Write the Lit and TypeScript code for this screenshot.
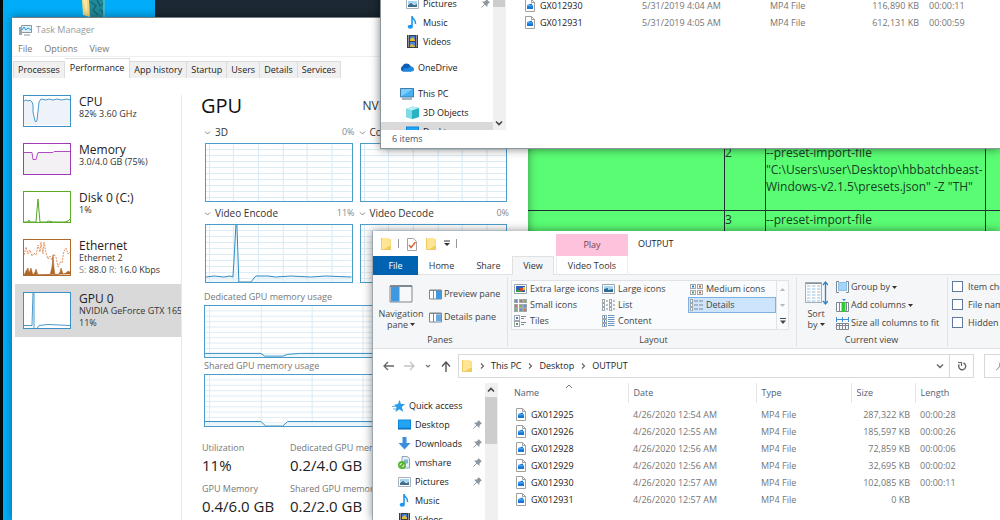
import { LitElement, html, svg, css } from "lit";
import { customElement, property } from "lit/decorators.js";
import { classMap } from "lit/directives/class-map.js";

const base = css`
  * { box-sizing: border-box; }
  button, input, a { font: inherit; color: inherit; margin: 0; }
  button { background: none; border: 0; padding: 0; white-space: nowrap; }
  a { text-decoration: none; }
  svg { display: block; flex: none; }
`;

/* ---------- icons ---------- */

const icon = (w: number, h: number, body: unknown) =>
  html`<svg width=${w} height=${h} viewBox="0 0 ${w} ${h}" fill="none" aria-hidden="true">${body}</svg>`;

const folder = () => icon(12, 14, svg`
  <path d="M1 1h8v1h2v11H1z" fill="#fbe08a"/><path d="M1 1h8v12H1z" fill="#ffe594"/>
  <path d="M9 9h2v4H3z" fill="#f2cc5d"/><path d="M1.500 1v11.500h9.500" stroke="#efcb68"/>`);

const fileIcon = () => icon(10, 13, svg`
  <path d="M.5.5h6l3 3v9h-9z" fill="#fff" stroke="#a0a0a0"/><path d="M6.500.5v3h3" stroke="#a0a0a0"/>
  <path d="M2 6l5-1.500V6h1v4H2z" fill="#1279d8"/><path d="M2 6.800h6" stroke="#8ecbf7" stroke-width=".7"/>`);

const pin = () => icon(9, 9, svg`
  <path d="M5.500 0L9 3.500l-1 .3L6.500 5.500 6.300 8 1 2.700l2.500-.2L5.200 1z" fill="#8d979f"/>
  <path d="M4 5L.5 8.500" stroke="#8d979f"/>`);

const chev = (d: string, w = 8, color = "#555", sw = 1.3) =>
  icon(w, w, svg`<path d=${d} stroke=${color} stroke-width=${sw}/>`);

const caret = () => icon(5, 3, svg`<path d="M0 0h5L2.500 3z" fill="#333"/>`);

const places: Record<string, unknown> = {
  star: icon(13, 12, svg`<path d="M7.500 0L9 4h4L9.800 7l1.500 5-4-2.800L3.500 12l1-5L2 4.800l4-.8z" fill="#2b9be8"/><path d="M0 6.500h4M1 9h3" stroke="#5fb5f1"/>`),
  desktop: icon(13, 11, svg`<path d="M0 .5h13v9.500H0z" fill="#0f87dd"/><path d="M1 1.500h11V8.500H1z" fill="#22a4f5"/><path d="M0 10h13" stroke="#0b62a8"/>`),
  down: icon(13, 13, svg`<path d="M4.500 0h4v6H12.500L6.500 12.500.500 6H4.500z" fill="#3a8fdc"/>`),
  share: icon(13, 13, svg`<path d="M4 .5h5l2.500 2v9.500H4z" fill="#e8f1f8" stroke="#8fa2b0"/><path d="M6 3.500h4v4H6z" fill="#7db7e0"/><circle cx="4" cy="9" r="4" fill="#5ab534"/><path d="M2 9.500a2 2 0 012-2M6 8.500a2 2 0 01-2 2.200" stroke="#e9f8df"/>`),
  pictures: icon(13, 10, svg`<path d="M.5.5h12v9H.5z" fill="#fff" stroke="#a6b3bd"/><path d="M2 2h9v3H2z" fill="#a8d4f3"/><path d="M2 6l3-2 3 2 3-1v3H2z" fill="#3f6d8a"/>`),
  music: icon(13, 13, svg`<path d="M6 10.500V0c0 3.500 4.500 3.500 3.500 8" stroke="#1d97ee" stroke-width="1.600"/><ellipse cx="4.300" cy="10.700" rx="2.600" ry="2" fill="#1d97ee"/>`),
  videos: icon(13, 13, svg`<path d="M1 0h11v13H1z" fill="#3c4046"/><path d="M4 1h5v5H4z" fill="#3877d6"/><path d="M4 7h5v5H4z" fill="#4a85d8"/><path d="M4 4l3-2 2 3v1H4z" fill="#e8b93a"/><path d="M4 10l2-1 3 2v1H4z" fill="#d8b046"/><path d="M2.500.5v12M10.500.5v12" stroke="#e8e8e8" stroke-dasharray="1 1"/>`),
  onedrive: icon(14, 9, svg`<path d="M3 8.500a3 3 0 01-.5-5.500A4.500 4.500 0 0110.500 3 3 3 0 0111 8.500z" fill="#0f5fb5"/><path d="M3 8.500c-1-2 2-4 4-3l4-2c2 .3 3 1.500 3 2.800 0 1.500-1 2.200-2.500 2.200z" fill="#1c8ae0"/>`),
  pc: icon(14, 12, svg`<path d="M.5.5h13v8.500H.5z" fill="#45b0f2" stroke="#3a7dab"/><path d="M1 1h12L1 8.500z" fill="#7ccbf8"/><path d="M2 11h10" stroke="#8c9aa5" stroke-width="1.500"/>`),
  cube: icon(13, 13, svg`<path d="M0 3l7-2.500L13 2v9l-6 2-7-2z" fill="#27b3c4"/><path d="M0 3l6 1.500V13L0 11z" fill="#7fdbe6"/><path d="M0 3l7-2.500L13 2 6 4.500z" fill="#bdf0f4"/>`),
};

const frame = "#7f8890";
const layouts: Record<string, unknown> = {
  xl: icon(13, 10, svg`<path d="M.5.5h12v9H.5z" fill="#fff" stroke="#9aa3ab"/><path d="M2 2h9v6H2z" fill="#2f5fb8"/><path d="M2 6h5v2H2z" fill="#3c9a48"/><path d="M6 4h3v3H6z" fill="#d24a2a"/><path d="M9 3h2v3H9z" fill="#e8c63a"/>`),
  large: icon(13, 10, svg`<path d="M.5.5h12v9H.5z" fill="#fff" stroke="#9aa3ab"/><path d="M2 2h9v6H2z" fill="#a9d5f2"/><path d="M2 5l4-1v2l5-1v3H2z" fill="#2d6a92"/>`),
  medium: icon(13, 11, svg`${[0, 7].map(x => [0, 6].map(y => svg`<rect x=${x + .5} y=${y + .5} width="5" height="4" fill="#fff" stroke="#a0a7ad"/><rect x=${x + 2} y=${y + 1.5} width="2" height="2" fill=${x === y ? "#3a78b8" : x ? "#c9622f" : "#4f9a48"} />`))}`),
  small: icon(13, 13, svg`${[0, 5, 9].map((x, i) => [0, 5, 9].map((y, j) => svg`<rect x=${x + .5} y=${y + .5} width="3" height="3" fill="#fff" stroke="#a0a7ad"/><rect x=${x + 1} y=${y + 1} width="2" height="2" fill=${["#5a94c9", "#c9744f", "#8bab6e"][(i + j) % 3]} />`))}`),
  list: icon(13, 12, svg`${[0, 7].map(x => [0, 4, 8].map(y => svg`<rect x=${x + .5} y=${y + .5} width="2" height="3" fill="#fff" stroke="#a0a7ad"/><path d="M${x + 4} ${y + 2}h2" stroke=${frame} />`))}`),
  details: icon(13, 12, svg`${[0, 4, 8].map(y => svg`<rect x=".5" y=${y + .5} width="2" height="3" fill="#fff" stroke="#a0a7ad"/><path d="M4 ${y + 2}h4M9 ${y + 2}h4" stroke=${frame} />`)}`),
  tiles: icon(13, 12, svg`${[0, 6].map(y => svg`<rect x=".5" y=${y + .5} width="5" height="5" fill="#fff" stroke="#a0a7ad"/><rect x="2" y=${y + 2} width="2" height="2" fill=${y ? "#4f9a48" : "#3a78c8"} /><path d="M7 ${y + 1.5}h5M7 ${y + 3.5}h3" stroke=${frame} />`)}`),
  content: icon(13, 12, svg`${[0, 4, 8].map(y => svg`<rect x=".5" y=${y + .5} width="4" height="3" fill="#fff" stroke="#a0a7ad"/><rect x="2" y=${y + 1} width="1" height="2" fill="#3a78c8"/><path d="M6 ${y + .5}h6.500M6 ${y + 2.5}h6.500" stroke="#6f95bd"/>`)}`),
};

const paneIcon = (details: boolean) => icon(13, 11, svg`
  <path d="M.5 1h12v9H.5z" fill="#fff" stroke=${frame} /><path d="M0 1.500h13M4.500 1v9" stroke=${frame} />
  <path d="M7 2h5v8H7z" fill=${details ? "#9cc8ee" : "#3f98e0"} />
  ${details ? svg`<path d="M7 4h5M7 6h5M7 8h5" stroke="#3f86c8"/>` : ""}`);

const navPaneIcon = () => icon(24, 18, svg`
  <path d="M1 1h22v16H1z" fill="#f7f8f9" stroke=${frame} /><path d="M1 1h22" stroke=${frame} stroke-width="2"/>
  <path d="M2 2h8.500v14.500H2z" fill="#3f98e0"/>`);

const sortIcon = () => icon(24, 24, svg`
  <path d="M1.500 1.500h16v20h-16z" fill="#fff" stroke="#a5acb2"/><path d="M1.500 2.500h16" stroke="#888f96"/>
  ${[5, 8, 11, 14, 17, 20].map(y => svg`<path d="M3 ${y}h3.500M8 ${y}h3.500M13 ${y}h3.500" stroke=${y % 2 ? "#a9bccb" : "#8fc3e8"} />`)}
  <path d="M21.500 2v20M19 4l2.500-3L24 4M19 20l2.500 3 2.500-3" stroke="#2f83c8" stroke-width="1.300"/>`);

const groupIcon = () => icon(13, 12, svg`<path d="M3 .5H.5v11H3M10 .5h2.500v11H10" stroke=${frame} /><path d="M2.500 1.500h8v8h-8z" fill="#a6d4f7" stroke="#8bc0e8"/>`);
const addIcon = () => icon(13, 13, svg`<path d="M.5 3.500h12v9H.5z" fill="#fff" stroke=${frame} /><path d="M3.500 3v9M10.500 3v9" stroke=${frame} /><path d="M5.500 3h4v10h-4z" fill="#2fc93a"/><path d="M6 0h4L8 2z" fill="#2f83c8"/>`);
const fitIcon = () => icon(13, 13, svg`<path d="M.5 0v5M6.500 0v5M12.500 0v5M1 2.500h11" stroke="#3f8fd0"/><path d="M.5 6.500h12v6H.5zM3.500 6v7M6.500 6v7M9.500 6v7M0 8.500h13" stroke=${frame} />`);

/* ---------- navigation tree ---------- */

interface Place { icon: string; label: string; pinned?: boolean; root?: boolean; gap?: boolean; selected?: boolean; }

@customElement("nav-tree")
class NavTree extends LitElement {
  @property({ attribute: false }) places: Place[] = [];
  @property({ type: Boolean, reflect: true }) end = false;
  static styles = [base, css`
    :host { display: flex; width: 125px; overflow: hidden; border-right: 1px solid #f0f0f0; }
    nav { flex: 1; min-width: 0; display: flex; flex-direction: column; padding-top: 13px; }
    :host([end]) nav { padding-top: 0; }
    a { display: flex; align-items: center; gap: 3px; height: 19px; flex: none; padding: 0 3px 0 25px; white-space: nowrap; }
    a.root { padding-left: 19px; }
    a.gap { margin-top: 7px; }
    a.sel { background: #d9d9d9; }
    a span { flex: 1; }
    a svg:first-child { margin-right: 1px; }
    .bar { width: 12px; background: #f0f0f0; display: flex; flex-direction: column; align-items: center; }
    .up, .down { height: 14px; display: grid; place-items: center; width: 12px; }
    .thumb { width: 12px; height: 47px; background: #cdcdcd; }
    :host([end]) .bar { justify-content: space-between; }
    :host([end]) .thumb { height: 13px; }
  `];
  render() {
    return html`
      <nav>${this.places.map(p => html`
        <a href="#" class=${classMap({ root: !!p.root, gap: !!p.gap, sel: !!p.selected })}>
          ${places[p.icon]}<span>${p.label}</span>${p.pinned ? pin() : ""}
        </a>`)}
      </nav>
      <div class="bar">
        ${this.end ? "" : html`<div class="up">${chev("M1 5.500L4 2.500 7 5.500", 8, "#444", 1.6)}</div>`}
        <div class="thumb"></div>
        ${this.end ? html`<div class="down">${chev("M1 2.500L4 5.500 7 2.500", 8, "#444", 1.6)}</div>` : ""}
      </div>`;
  }
}

/* ---------- file list ---------- */

@customElement("file-list")
class FileList extends LitElement {
  @property({ attribute: false }) rows: string[][] = [];
  @property({ type: Boolean }) headless = false;
  static styles = [base, css`
    :host { display: block; flex: 1; min-width: 0; overflow: hidden; padding-left: 2px; }
    table { width: 100%; min-width: 500px; table-layout: fixed; border-collapse: collapse; }
    th, td { padding: 0 0 0 5px; text-align: left; font-weight: 400; white-space: nowrap; }
    td { height: 17px; color: #757575; }
    th { height: 20px; color: #4f607a; border-right: 1px solid #e4e4e4; }
    th:last-child { border: 0; }
    th:first-child { padding-left: 14px; }
    td:first-child { padding-left: 16px; color: #222; }
    td.size { text-align: right; padding-right: 5px; }
    .name { display: flex; align-items: center; gap: 5px; }
    .head { display: flex; justify-content: space-between; padding-right: 55px; height: 18px; line-height: 18px; }
    .spacer td { height: 3px; }
    .c1, .c2 { width: 128px; } .c3 { width: 95px; } .c4 { width: 64px; }
  `];
  render() {
    return html`<table>
      <colgroup><col class="c1"><col class="c2"><col class="c3"><col class="c4"><col></colgroup>
      ${this.headless ? "" : html`<thead>
        <tr><th><div class="head">Name ${icon(8, 5, svg`<path d="M1 4L4 1 7 4" stroke="#777"/>`)}</div></th><th>Date</th><th>Type</th><th>Size</th><th>Length</th></tr>
        <tr class="spacer"><td colspan="5"></td></tr></thead>`}
      <tbody>${this.rows.map(r => html`<tr>
        <td><div class="name">${fileIcon()}${r[0]}</div></td><td>${r[1]}</td><td>MP4 File</td><td class="size">${r[2]}</td><td>${r[3]}</td>
      </tr>`)}</tbody>
    </table>`;
  }
}

/* ---------- usage graph ---------- */

@customElement("usage-graph")
class UsageGraph extends LitElement {
  @property() line = "";
  @property({ type: Boolean }) wide = false;
  static styles = [base, css`
    :host { display: block; border: 1px solid #4c9cc9; height: 59px; background: #fff; }
    :host([wide]) { height: 53px; }
    svg { width: 100%; height: 100%; }
  `];
  render() {
    const xs = this.wide ? [4, 56, 107, 158, 209, 260] : [3, 27, 52, 77, 101, 126];
    const w = this.wide ? 302 : 146;
    return html`<svg viewBox="0 0 ${w} 57" preserveAspectRatio="none" fill="none" aria-hidden="true">
      ${xs.map(x => svg`<path d="M${x + .5} 0v57" stroke="#d7eaf5"/>`)}
      ${[5, 11, 17, 23, 29, 35, 41, 47, 53].map(y => svg`<path d="M0 ${y + .5}h${w}" stroke="#dcecf6"/>`)}
      ${this.line ? svg`<path d="${this.line}V57H0z" fill="#e2f0f8" fill-opacity=".5"/><path d=${this.line} stroke="#2f8dc4"/>` : ""}
    </svg>`;
  }
}

/* ---------- task manager ---------- */

@customElement("task-manager")
class TaskManager extends LitElement {
  static styles = [base, css`
    :host { display: flex; flex-direction: column; background: #fff; border: 1px solid #777f86; border-width: 1px 0 0 0; }
    .title { display: flex; align-items: center; gap: 4px; height: 24px; padding-left: 7px; color: #999; }
    .menu { display: flex; gap: 12px; height: 15px; padding-left: 6px; color: #777; align-items: center; border-bottom: 1px solid #f0f0f0; }
    .tabs { display: flex; align-items: flex-end; height: 21px; padding-left: 1px; }
    .tabs button { height: 17px; background: #f0f0f0; border: 1px solid #dcdcdc; border-left-width: 0; border-bottom: 0; color: #222; padding: 0 4px; }
    .tabs button:first-child { border-left-width: 1px; }
    .tabs .on { background: #fff; height: 20px; padding: 0 5px 2px; }
    .body { display: flex; flex: 1; min-height: 0; padding: 9px 0 0 3px; }
    .list { width: 166px; flex: none; overflow: hidden; }
    .list button { display: flex; align-items: flex-start; gap: 8px; width: 100%; padding: 8px 0 8px 8px; text-align: left; overflow: hidden; color: #333; }
    .list .on { background: #d9d9d9; }
    .txt { display: flex; flex-direction: column; line-height: 12px; }
    .txt b { font-weight: 400; font-size: 12px; line-height: 13px; color: #222; }
    .txt i { font-style: normal; color: #888; }
    .pane { flex: 1; min-width: 0; margin-top: 8px; border-left: 1px solid #e8e8e8; padding: 0 21px 0 19px; }
    .top { display: flex; justify-content: space-between; align-items: center; height: 30px; margin-top: -4px; }
    h1 { margin: 0; font-size: 20px; font-weight: 400; line-height: 30px; color: #111; }
    .model { font-size: 12px; color: #333; }
    .grid { display: grid; grid-template-columns: 1fr 1fr; column-gap: 7px; padding-left: 4px; }
    .cap { display: flex; align-items: center; gap: 4px; height: 22px; color: #333; font-size: 10px; margin: 0 -2px 0 -1px; }
    .cap em { margin-left: auto; font-style: normal; color: #888; font-size: 9px; }
    .mem { height: 16px; line-height: 16px; padding-left: 3px; color: #777; }
    .mem-graph { margin-left: 3px; }
    .mem-first { margin-top: 6px; }
    .stats { display: grid; grid-template-columns: 88px 1fr; row-gap: 6px; padding: 13px 0 0 1px; }
    .stats dt { color: #777; line-height: 15px; }
    dl { margin: 0; } dd { margin: 0; font-size: 15px; line-height: 20px; color: #222; }
    .stats div { white-space: nowrap; }
  `];
  thumb(color: string, h: number, body: unknown) {
    return icon(48, h, svg`<rect x=".5" y=".5" width="47" height=${h - 1} fill="#fff"/>${body}<rect x=".5" y=".5" width="47" height=${h - 1} stroke=${color} />`);
  }
  render() {
    const cpu = "M1 6l2-1 2 1 2-1 2 2 1 3 0 7 2 9 1 1 1-2 1-9 1-9 2-3 5 1 3-1 4 1 4-1 5 1 5-1 3 1";
    const items = [
      { t: "CPU", s: "82%  3.60 GHz", g: this.thumb("#3c92c8", 32, svg`<path d="${cpu}v25H1z" fill="#eef3f9"/><path d=${cpu} stroke="#4a9acc"/>`) },
      { t: "Memory", s: "3.0/4.0 GB (75%)", g: this.thumb("#a33bb8", 32, svg`<path d="M1 9.500h8l1 7h3l2-7h15l1-1h17v23H1z" fill="#f3f1f4"/><path d="M1 9.500h8l1 7h3l2-7h15l1-1h17" stroke="#b14cc4"/>`) },
      { t: "Disk 0 (C:)", s: "1%", g: this.thumb("#5cab2a", 32, svg`<path d="M1 31h4l1-2 1 2h6l1-12 1-11 1 12 1 11h7l1-1 5 1 12 0 3-1 2-2" stroke="#57a629"/>`) },
      { t: "Ethernet", s: "Ethernet 2", g: this.thumb("#b0682a", 37, svg`<path d="M1 16l2-8 2 7 2-4 2 6 2-3 2 2 2-10 2 7 1-10 2 12 1-12 2 11 2 6 2-3 2 4 2-6 2 3 2 10 2-5 2 1 2-12 2-3 2 6 2-2 2 4" stroke="#e5935f" stroke-dasharray="2 1"/><path d="M1 36l2-4 2-3 1 5 2-5 2 7 2-3 1-3 2 6h12l2-8 1-12 1 13 1 7h3l2-3 1-4 2 6 3-1 2-2 2 1v2z" fill="#b0682a" stroke="#a85f20" stroke-width=".5"/>`) },
      { t: "GPU 0", s: "NVIDIA GeForce GTX 1650", g: this.thumb("#3c92c8", 37, svg`<path d="M1 33.500h8l1-33h1v36h3l2-3 9-1 22 1" stroke="#4a9acc"/>`) },
    ];
    return html`
      <div class="title">${icon(13, 12, svg`<path d="M2.500 1.500h10v7h-10z" fill="#dff0fa" stroke="#8b979f"/><path d="M3 6l2-3 2 3 2-2 3 2" stroke="#259bd8"/><path d="M0 3h3v8H0z" fill="#9ba5ac"/><path d="M5 11h6" stroke="#8b979f"/>`)}<span>Task Manager</span></div>
      <div class="menu"><button>File</button><button>Options</button><button>View</button></div>
      <div class="tabs" role="tablist">${["Processes", "Performance", "App history", "Startup", "Users", "Details", "Services"].map(t =>
        html`<button role="tab" class=${t === "Performance" ? "on" : ""}>${t}</button>`)}</div>
      <div class="body">
        <div class="list">${items.map((it, i) => html`<button class=${i === 4 ? "on" : ""}>${it.g}
          <span class="txt"><b>${it.t}</b><span>${it.s}</span>${i === 3 ? html`<span><i>S:</i> 88.0 <i>R:</i> 16.0 Kbps</span>` : i === 4 ? html`<span>11%</span>` : ""}</span></button>`)}</div>
        <div class="pane">
          <div class="top"><h1>GPU</h1><span class="model">NVIDIA GeForce GTX 1650</span></div>
          <div class="grid">${[
            ["3D", "0%", ""], ["Copy", "0%", ""],
            ["Video Encode", "11%", "M0 52l8-1 10 1 6-1 3 1 1-15 2-37 1 0 2 57 12 0 5-6 12 0 8 1 15-1 20 1 15-1 26 1"],
            ["Video Decode", "0%", ""],
          ].map(([n, v, l]) => html`<div><div class="cap">${chev("M1 2.500l2.500 2.500L6 2.500", 7, "#888", 1)}<span>${n}</span><em>${v}</em></div>
            <usage-graph .line=${l}></usage-graph></div>`)}</div>
          <div class="mem mem-first">Dedicated GPU memory usage</div>
          <usage-graph class="mem-graph" wide .line=${"M0 53h56l4 3h18l5-2 12-1h207"}></usage-graph>
          <div class="mem">Shared GPU memory usage</div>
          <usage-graph class="mem-graph" wide .line=${"M0 52h56l5 5h17l5-5h219"}></usage-graph>
          <dl class="stats">
            <div><dt>Utilization</dt><dd>11%</dd></div><div><dt>Dedicated GPU memory</dt><dd>0.2/4.0 GB</dd></div>
            <div><dt>GPU Memory</dt><dd>0.4/6.0 GB</dd></div><div><dt>Shared GPU memory</dt><dd>0.2/2.0 GB</dd></div>
          </dl>
        </div>
      </div>`;
  }
}

/* ---------- explorer with ribbon ---------- */

@customElement("explorer-window")
class ExplorerWindow extends LitElement {
  static styles = [base, css`
    :host { display: flex; flex-direction: column; background: #fff; box-shadow: 0 0 9px rgba(0,0,0,.45); border-left: 1px solid #9aa6b0; }
    .title { display: flex; height: 25px; }
    .qat { width: 183px; display: flex; align-items: center; padding-left: 7px; gap: 7px; }
    .qat hr { width: 1px; height: 9px; border: 0; margin: 0 0 0 -1px; background: #999; }
    .play { width: 72px; margin-top: 3px; background: #ffc2dd; color: #6b4657; text-align: center; line-height: 22px; }
    .name { padding-left: 10px; line-height: 25px; color: #222; }
    .tabs { display: flex; height: 19px; border-bottom: 1px solid #dfe1e3; color: #333; }
    .tabs button { height: 19px; width: 47px; }
    .tabs .file { width: 45px; background: #0063b1; color: #fff; }
    .tabs .view { width: 42px; background: #f5f6f7; border: 1px solid #dfe1e3; border-bottom: 0; }
    .tabs .tools { width: 72px; margin-left: 2px; border: 1px solid #eee; border-width: 0 1px; }
    .ribbon { display: flex; height: 74px; background: #f5f6f7; border-bottom: 1px solid #dfe1e3; padding-top: 2px; color: #444; overflow: hidden; }
    .group { flex: none; display: flex; flex-direction: column; justify-content: space-between; text-align: center; box-shadow: 1px 0 0 #e2e3e4; margin-bottom: 1px; }
    .group .row { display: flex; text-align: left; }
    .label { line-height: 14px; }
    .panes { width: 134px; } .layout { width: 289px; padding-left: 4px; } .view-group { width: 151px; } .show { box-shadow: none; text-align: left; padding-left: 5px; }
    .big { display: flex; flex-direction: column; align-items: center; width: 56px; line-height: 12px; padding-top: 8px; gap: 5px; white-space: normal; }
    .big span { display: flex; flex-direction: column; align-items: center; }
    .big i { display: flex; align-items: center; gap: 2px; font-style: normal; line-height: 10px; height: 9px; }
    .big b { font-weight: 400; }
    .pair { display: flex; flex-direction: column; gap: 7px; padding-top: 9px; }
    .pair button, .cur button { display: flex; align-items: center; gap: 2px; height: 16px; }
    .cur { display: flex; flex-direction: column; gap: 2px; padding-top: 2px; }
    .sort { width: 40px; padding-top: 4px; gap: 3px; }
    .gallery { display: grid; grid-template-columns: 88px 88px 88px 12px; margin: 4px 0 0 1px; box-shadow: 0 0 0 1px #e0e2e5; background: #fafbfc; width: 276px; }
    .gallery button { display: flex; align-items: center; gap: 3px; height: 16px; padding-left: 2px; text-align: left; }
    .gallery button.on { background: #cce4fc; box-shadow: inset 0 0 0 1px #7db1e2; }
    .gallery .step { padding: 0; justify-content: center; border-left: 1px solid #e0e2e5; }
    .checks { display: flex; flex-direction: column; gap: 7px; padding-top: 4px; }
    label { display: flex; align-items: center; gap: 5px; height: 11px; white-space: nowrap; }
    input[type=checkbox] { appearance: none; width: 11px; height: 11px; border: 1px solid #5f789b; background: #fff; }
    .address { display: flex; align-items: center; height: 34px; gap: 10px; overflow: hidden; }
    .nav { display: flex; align-items: center; gap: 10px; width: 75px; padding-left: 10px; }
    .path { flex: 1; display: flex; align-items: center; height: 24px; border: 1px solid #d9d9d9; padding-left: 2px; gap: 5px; color: #222; min-width: 0; }
    .path .drop { margin-left: auto; }
    .path .reload { width: 24px; height: 22px; border-left: 1px solid #d9d9d9; display: grid; place-items: center; }
    .search { flex: none; width: 16px; height: 24px; border: 1px solid #d9d9d9; border-right: 0; display: flex; align-items: center; padding-left: 11px; overflow: hidden; }
    .search input { border: 0; outline: 0; width: 0; padding: 0; }
    .body { flex: 1; display: flex; min-height: 0; }
  `];
  render() {
    const modes = [["xl", "Extra large icons"], ["large", "Large icons"], ["medium", "Medium icons"],
      ["small", "Small icons"], ["list", "List"], ["details", "Details"], ["tiles", "Tiles"], ["content", "Content"]];
    const opt = ([k, t]: string[]) => html`<button class=${k === "details" ? "on" : ""}>${layouts[k]}${t}</button>`;
    const sep = () => chev("M3 1.500L5.500 4 3 6.500", 8, "#666", 1.2);
    return html`
      <div class="title">
        <div class="qat">${folder()}<hr>
          ${icon(12, 14, svg`<path d="M1.500 1.500h6l3 3v9h-9z" fill="#fff" stroke="#a3a3a3"/><path d="M3 8l2 2.500L9.500 5" stroke="#e0663a" stroke-width="1.500"/>`)}
          ${folder()}${icon(6, 7, svg`<path d="M0 1h6" stroke="#333"/><path d="M0 3h6L3 6z" fill="#333"/>`)}<hr>
        </div>
        <div class="play">Play</div><div class="name">OUTPUT</div>
      </div>
      <div class="tabs" role="tablist">
        <button class="file">File</button><button>Home</button><button>Share</button><button class="view">View</button><button class="tools">Video Tools</button>
      </div>
      <div class="ribbon">
        <div class="group panes">
          <div class="row">
            <button class="big">${navPaneIcon()}<span><b>Navigation</b><i>pane ${caret()}</i></span></button>
            <div class="pair"><button>${paneIcon(false)}Preview pane</button><button>${paneIcon(true)}Details pane</button></div>
          </div>
          <div class="label">Panes</div>
        </div>
        <div class="group layout">
          <div class="gallery">
            ${modes.slice(0, 3).map(opt)}<button class="step" aria-label="Previous row">${icon(5, 3, svg`<path d="M0 3h5L2.500 0z" fill="#b5b9be"/>`)}</button>
            ${modes.slice(3, 6).map(opt)}<button class="step" aria-label="Next row">${icon(5, 3, svg`<path d="M0 0h5L2.500 3z" fill="#b5b9be"/>`)}</button>
            ${modes.slice(6).map(opt)}<span></span><button class="step" aria-label="More">${icon(6, 6, svg`<path d="M0 .5h6" stroke="#445"/><path d="M0 2.500h6L3 6z" fill="#445"/>`)}</button>
          </div>
          <div class="label">Layout</div>
        </div>
        <div class="group view-group">
          <div class="row">
            <button class="big sort">${sortIcon()}<span><b>Sort</b><i>by ${caret()}</i></span></button>
            <div class="cur"><button>${groupIcon()}Group by ${caret()}</button><button>${addIcon()}Add columns ${caret()}</button><button>${fitIcon()}Size all columns to fit</button></div>
          </div>
          <div class="label">Current view</div>
        </div>
        <div class="group show"><div class="checks">
          ${["Item check boxes", "File name extensions", "Hidden items"].map(t => html`<label><input type="checkbox">${t}</label>`)}
        </div></div>
      </div>
      <div class="address">
        <div class="nav">
          <button aria-label="Back">${icon(11, 10, svg`<path d="M11 5H1.500M5 1L1 5l4 4" stroke="#666" stroke-width="1.300"/>`)}</button>
          <button aria-label="Forward">${icon(11, 10, svg`<path d="M0 5h9.500M6 1l4 4-4 4" stroke="#c4c4c4" stroke-width="1.300"/>`)}</button>
          <button aria-label="Recent">${chev("M1 2l2 2 2-2", 6, "#777", 1.2)}</button>
          <button aria-label="Up">${icon(10, 11, svg`<path d="M5 11V1.500M1 5.500L5 1l4 4.500" stroke="#555" stroke-width="1.400"/>`)}</button>
        </div>
        <div class="path">${folder()}${sep()}<button>This PC</button>${sep()}<button>Desktop</button>${sep()}<button>OUTPUT</button>
          <button class="drop" aria-label="History">${chev("M1 2.500L4 5.500 7 2.500", 8, "#666", 1.4)}</button>
          <button class="reload" aria-label="Refresh">${icon(10, 10, svg`<path d="M6.500 2A3.500 3.500 0 1 1 2.200 3.400" stroke="#666" stroke-width="1.400"/><path d="M1 1.500h3.500V5" stroke="#666" stroke-width="1.200"/>`)}</button>
        </div>
        <div class="search">${icon(10, 10, svg`<path d="M0 9.500L4 5" stroke="#888"/><circle cx="6.500" cy="3.500" r="3" stroke="#888"/>`)}<input type="search" aria-label="Search OUTPUT"></div>
      </div>
      <div class="body">
        <nav-tree .places=${[
          { icon: "star", label: "Quick access", root: true },
          { icon: "desktop", label: "Desktop", pinned: true }, { icon: "down", label: "Downloads", pinned: true },
          { icon: "share", label: "vmshare", pinned: true }, { icon: "pictures", label: "Pictures", pinned: true },
          { icon: "music", label: "Music" }, { icon: "videos", label: "Videos" },
        ]}></nav-tree>
        <file-list .rows=${[
          ["GX012925", "4/26/2020 12:54 AM", "287,322 KB", "00:00:28"],
          ["GX012926", "4/26/2020 12:55 AM", "185,597 KB", "00:00:26"],
          ["GX012928", "4/26/2020 12:56 AM", "72,859 KB", "00:00:06"],
          ["GX012929", "4/26/2020 12:56 AM", "32,695 KB", "00:00:02"],
          ["GX012930", "4/26/2020 12:57 AM", "102,085 KB", "00:00:11"],
          ["GX012931", "4/26/2020 12:57 AM", "0 KB", ""],
        ]}></file-list>
      </div>`;
  }
}

/* ---------- desktop ---------- */

@customElement("app-root")
class AppRoot extends LitElement {
  static styles = [base, css`
    :host { display: block; position: relative; height: 100vh; overflow: hidden; background: #00adf8; border-left: 3px solid #06090c;
      font: 9px/12px "Open Sans", "Noto Sans", sans-serif; color: #222; }
    .shortcut { position: absolute; left: 79px; top: 0; }
    .browser { position: absolute; left: 152px; right: 0; top: 0; bottom: 0; background: #1c2833; padding: 143px 0 0 372px; }
    .queue { width: 100%; border-collapse: collapse; background: #5afc74; table-layout: fixed; font-size: 12px; line-height: 17px; color: #174021; }
    .queue td { border: 1px solid #1f2b35; padding: 0; vertical-align: top; height: 67px; }
    .queue td:last-child { border-right: 0; }
    .q1 { width: 197px; } .q2 { width: 41px; } .q3 { width: 220px; }
    task-manager { position: absolute; left: 9px; top: 17px; width: 516px; bottom: 0; box-shadow: 0 0 9px rgba(0,0,0,.4); }
    .files { position: absolute; left: 377px; right: 0; top: -6px; background: #fff; box-shadow: 0 0 9px rgba(0,0,0,.5); border-left: 1px solid #8c959c; border-bottom: 1px solid #8c959c; }
    .split { display: flex; height: 136px; }
    .files file-list { padding-top: 3px; padding-left: 3px; }
    .status { height: 18px; line-height: 18px; padding-left: 11px; color: #43576e; }
    explorer-window { position: absolute; left: 369px; right: 0; top: 231px; bottom: 0; }
  `];
  render() {
    return html`
      <div class="shortcut">${icon(24, 17, svg`<path d="M0 0h8v17L1 15z" fill="#f5d67a"/><path d="M1 0h4v16z" fill="#fbe7a5"/><path d="M7 0h16v17H8z" fill="#1f8a9a"/><path d="M9 2l5 4-3 4 5 5M15 0l3 6 4-3M18 9l4 5" stroke="#176877" stroke-width="1.500"/><path d="M22 0v17" stroke="#42cbe6" stroke-width="1.500"/>`)}</div>
      <div class="browser">
        <table class="queue"><colgroup><col class="q1"><col class="q2"><col class="q3"><col></colgroup><tbody>
          <tr><td></td><td>2</td><td>--preset-import-file "C:\\Users\\user\\Desktop\\hbbatchbeast-Windows-v2.1.5\\presets.json" -Z "TH"</td><td></td></tr>
          <tr><td></td><td>3</td><td>--preset-import-file</td><td></td></tr>
        </tbody></table>
      </div>
      <task-manager></task-manager>
      <div class="files">
        <div class="split">
          <nav-tree end .places=${[
            { icon: "pictures", label: "Pictures", pinned: true }, { icon: "music", label: "Music" }, { icon: "videos", label: "Videos" },
            { icon: "onedrive", label: "OneDrive", root: true, gap: true }, { icon: "pc", label: "This PC", root: true, gap: true },
            { icon: "cube", label: "3D Objects" }, { icon: "desktop", label: "Desktop", selected: true },
          ]}></nav-tree>
          <file-list headless .rows=${[
            ["GX012930", "5/31/2019 4:04 AM", "116,890 KB", "00:00:11"],
            ["GX012931", "5/31/2019 4:05 AM", "612,131 KB", "00:00:59"],
          ]}></file-list>
        </div>
        <div class="status">6 items</div>
      </div>
      <explorer-window></explorer-window>`;
  }
}
